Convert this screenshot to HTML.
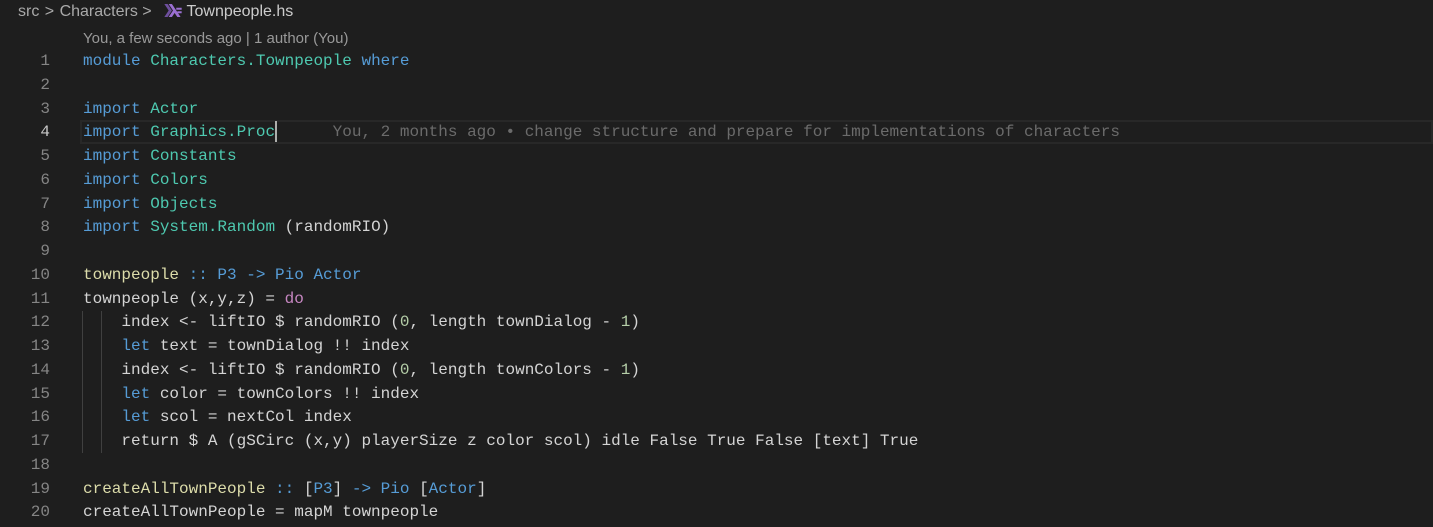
<!DOCTYPE html>
<html><head><meta charset="utf-8"><style>
html,body{margin:0;padding:0;background:#1e1e1e;width:1433px;height:527px;overflow:hidden}
.bc{position:absolute;left:18px;top:1px;font:16px "Liberation Sans",sans-serif;color:#a9a9a9;white-space:pre;line-height:22px}
.bc .f{color:#cccccc}
.lens{position:absolute;left:83px;top:29px;font:15px "Liberation Sans",sans-serif;color:#999999;line-height:20px}
.ln{position:absolute;left:0;width:50px;text-align:right;font:16px "Liberation Mono",monospace;color:#858585}
.code{position:absolute;left:83px;right:0;font:16px "Liberation Mono",monospace;color:#d4d4d4}
.l{height:23.75px;line-height:23.75px;white-space:pre}
.k{color:#569cd6}.m{color:#4ec9b0}.y{color:#dcdcaa}.p{color:#c586c0}.n{color:#b5cea8}
.g{position:absolute;width:1px;background:#404040}
.hl{position:absolute;left:80px;right:0;top:120px;height:20px;border:2px solid #282828}
.cur{position:absolute;left:275px;top:121px;width:2px;height:21px;background:#aeafad}
.blame{color:#6b6b6b}
</style></head><body>
<div class="bc">src <span style="margin:0 1px">&gt;</span> Characters <span>&gt;</span>  <svg width="18" height="13" viewBox="0 0 16 12" style="vertical-align:-1px;margin:0 5px 0 3px"><path d="M0 0h3l4 6-4 6H0l4-6z" fill="#6e4f9e"/><path d="M4 0h3l8 12h-3l-2.5-3.7L7 12H4l4-6z" fill="#9a6fd1"/><path d="M11 3.5h5v1.8h-5zM12 6.7h4v1.8h-4z" fill="#9a6fd1"/></svg><span class="f">Townpeople.hs</span></div>
<div class="lens">You, a few seconds ago | 1 author (You)</div>
<div class="hl"></div>
<div class="g" style="left:82px;top:311px;height:142px"></div>
<div class="g" style="left:101px;top:311px;height:142px"></div>
<div class="ln" style="top:50px"><div class="l">1</div><div class="l">2</div><div class="l">3</div><div class="l" style="color:#c6c6c6">4</div><div class="l">5</div><div class="l">6</div><div class="l">7</div><div class="l">8</div><div class="l">9</div><div class="l">10</div><div class="l">11</div><div class="l">12</div><div class="l">13</div><div class="l">14</div><div class="l">15</div><div class="l">16</div><div class="l">17</div><div class="l">18</div><div class="l">19</div><div class="l">20</div></div>
<div class="code" style="top:50px">
<div class="l"><span class="k">module</span> <span class="m">Characters.Townpeople</span> <span class="k">where</span></div>
<div class="l"> </div>
<div class="l"><span class="k">import</span> <span class="m">Actor</span></div>
<div class="l"><span class="k">import</span> <span class="m">Graphics.Proc</span>      <span class="blame">You, 2 months ago • change structure and prepare for implementations of characters</span></div>
<div class="l"><span class="k">import</span> <span class="m">Constants</span></div>
<div class="l"><span class="k">import</span> <span class="m">Colors</span></div>
<div class="l"><span class="k">import</span> <span class="m">Objects</span></div>
<div class="l"><span class="k">import</span> <span class="m">System.Random</span> (randomRIO)</div>
<div class="l"> </div>
<div class="l"><span class="y">townpeople</span> <span class="k">:: P3 -&gt; Pio Actor</span></div>
<div class="l">townpeople (x,y,z) = <span class="p">do</span></div>
<div class="l">    index &lt;- liftIO $ randomRIO (<span class="n">0</span>, length townDialog - <span class="n">1</span>)</div>
<div class="l">    <span class="k">let</span> text = townDialog !! index</div>
<div class="l">    index &lt;- liftIO $ randomRIO (<span class="n">0</span>, length townColors - <span class="n">1</span>)</div>
<div class="l">    <span class="k">let</span> color = townColors !! index</div>
<div class="l">    <span class="k">let</span> scol = nextCol index</div>
<div class="l">    return $ A (gSCirc (x,y) playerSize z color scol) idle False True False [text] True</div>
<div class="l"> </div>
<div class="l"><span class="y">createAllTownPeople</span> <span class="k">::</span> [<span class="k">P3</span>] <span class="k">-&gt; Pio</span> [<span class="k">Actor</span>]</div>
<div class="l">createAllTownPeople = mapM townpeople</div>
</div>
<div class="cur"></div>
</body></html>
